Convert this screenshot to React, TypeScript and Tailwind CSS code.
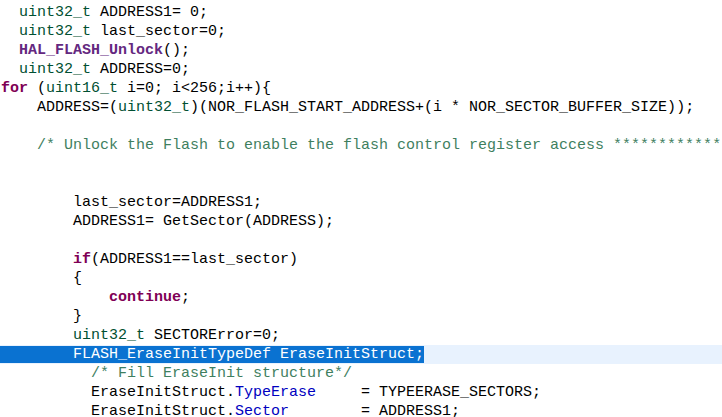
type Tok = [string, string?];

const T = 'text-[#005032]';
const KW = 'text-[#7f0055] font-bold';
const FN = 'text-[#642880] font-bold';
const CM = 'text-[#3f7f5f]';
const FD = 'text-[#0000c0]';

const lines: Tok[][] = [
  [['  '], ['uint32_t', T], [' ADDRESS1= 0;']],
  [['  '], ['uint32_t', T], [' last_sector=0;']],
  [['  '], ['HAL_FLASH_Unlock', FN], ['();']],
  [['  '], ['uint32_t', T], [' ADDRESS=0;']],
  [['for', KW], [' ('], ['uint16_t', T], [' i=0; i<256;i++){']],
  [['    ADDRESS=('], ['uint32_t', T], [')(NOR_FLASH_START_ADDRESS+(i * NOR_SECTOR_BUFFER_SIZE));']],
  [],
  [['    '], ['/* Unlock the Flash to enable the flash control register access ************************', CM]],
  [],
  [],
  [['        last_sector=ADDRESS1;']],
  [['        ADDRESS1= GetSector(ADDRESS);']],
  [],
  [['        '], ['if', KW], ['(ADDRESS1==last_sector)']],
  [['        {']],
  [['            '], ['continue', KW], [';']],
  [['        }']],
  [['        '], ['uint32_t', T], [' SECTORError=0;']],
  [],
  [['          '], ['/* Fill EraseInit structure*/', CM]],
  [['          EraseInitStruct.'], ['TypeErase', FD], ['     = TYPEERASE_SECTORS;']],
  [['          EraseInitStruct.'], ['Sector', FD], ['        = ADDRESS1;']],
];

const SELECTED = 18;

export default function App() {
  return (
    <div className="w-[722px] h-[417px] overflow-hidden bg-white text-black font-['Liberation_Mono',monospace] text-[15px] leading-[19px] pt-[3px]">
      {lines.map((toks, i) =>
        i === SELECTED ? (
          <div key={i} className="h-[19px] bg-[#e8f2fe] whitespace-pre">
            <span className="bg-[#0a72d1] text-white pl-px">        FLASH_EraseInitTypeDef EraseInitStruct;</span>
          </div>
        ) : (
          <div key={i} className="h-[19px] whitespace-pre pl-px">
            {toks.map(([t, c], j) => (
              <span key={j} className={c}>
                {t}
              </span>
            ))}
          </div>
        )
      )}
    </div>
  );
}
